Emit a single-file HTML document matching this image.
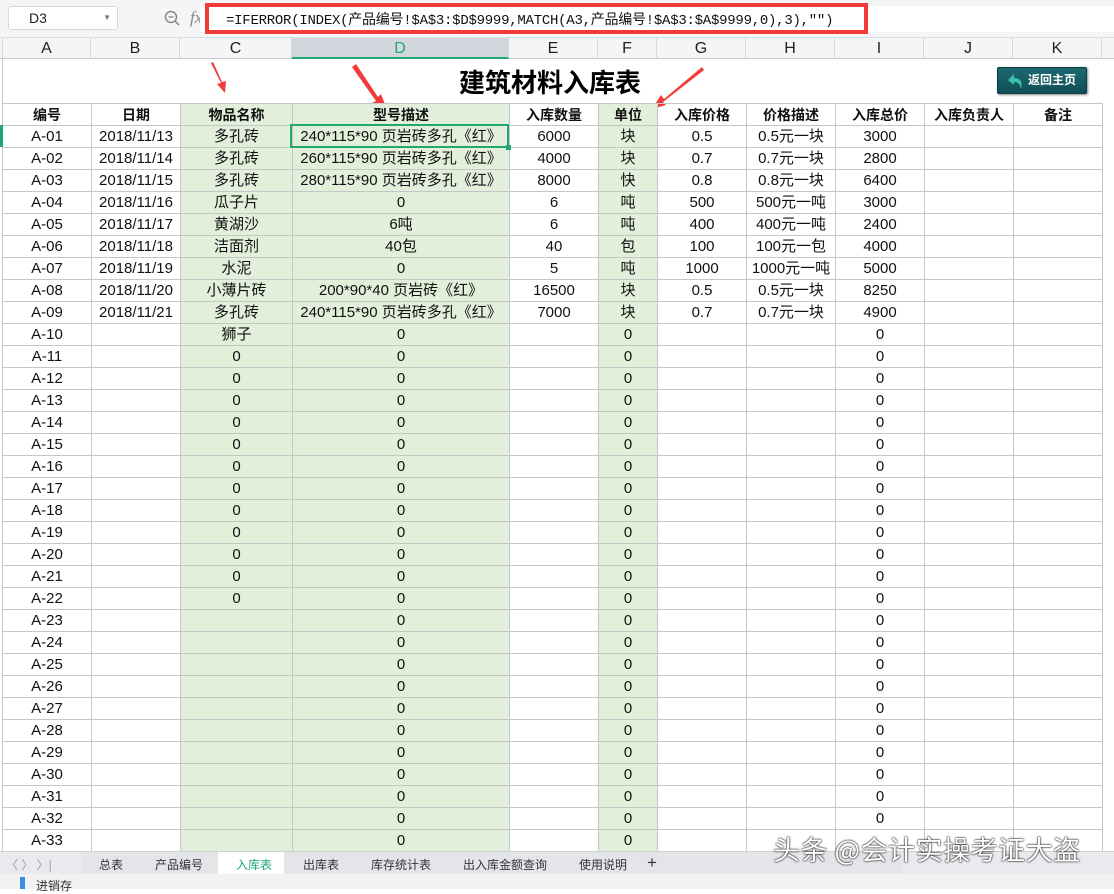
<!DOCTYPE html>
<html><head><meta charset="utf-8"><style>
*{margin:0;padding:0;box-sizing:border-box}
body{width:1114px;height:889px;overflow:hidden;background:#fff;font-family:"Liberation Sans","Noto Sans CJK SC",sans-serif;position:relative}
.fb{position:absolute;left:0;top:0;width:1114px;height:38px;background:#f4f5f7;border-bottom:1px solid #dcdde0}
.nb{position:absolute;left:8px;top:6px;width:110px;height:24px;background:#fff;border:1px solid #d7d8db;border-radius:3px;font-size:14px;line-height:22px;padding-left:20px;color:#222}
.nb i{position:absolute;right:6px;top:0;font-style:normal;font-size:8px;color:#777}
.fx{position:absolute;left:190px;top:8px;font-size:17px;color:#888;font-style:italic;font-family:"Liberation Serif",serif}
.fin{position:absolute;left:200px;top:6px;width:914px;height:26px;background:#fff}
.red{position:absolute;left:205px;top:3px;width:663px;height:31px;border:4px solid #f23a3a}
.ft{position:absolute;left:226px;top:9px;font-family:"Liberation Mono","Noto Sans CJK SC",monospace;font-size:14px;color:#111;letter-spacing:-0.25px;white-space:nowrap}
.ch{position:absolute;top:38px;left:0;width:1114px;height:21px;background:#f4f5f7;border-bottom:1px solid #c7c9cd}
.ch div{position:absolute;top:0;height:20px;border-right:1px solid #d9dadd;text-align:center;font-size:16px;line-height:21px;color:#222}
.title{position:absolute;left:300px;top:63px;width:500px;text-align:center;font-size:26px;font-weight:bold;color:#000;font-family:"Noto Sans CJK SC",sans-serif}
.btn{position:absolute;left:997px;top:67px;width:90px;height:27px;background:linear-gradient(#1d6a70,#0f4f55);border:1px solid #0c3d42;border-radius:2px;box-shadow:1px 1px 2px #888;color:#fff;font-size:12px;font-weight:bold;line-height:25px;padding-left:30px}
.btn svg{position:absolute;left:8px;top:3px}
table{position:absolute;left:2px;top:103px;border-collapse:collapse;table-layout:fixed}
td{height:22px;border:1px solid #c6c6c6;text-align:center;font-size:15px;color:#111;white-space:nowrap;overflow:hidden;padding:0;line-height:20px}
tr.h td{font-weight:bold;font-size:14px}
td.g{background:#e2efda}
.sel{position:absolute;left:290px;top:124px;width:219px;height:24px;border:2px solid #1fa870}
.sel i{position:absolute;right:-4px;bottom:-4px;width:5px;height:5px;background:#1fa870}
.tabs{position:absolute;left:0;top:851px;width:1114px;height:23px;background:#e9eaee;border-top:1px solid #d0d1d4;font-size:12px;color:#333}
.tabs span{position:absolute;top:4px}
.bot{position:absolute;left:0;top:874px;width:1114px;height:15px;background:#f1f2f4}
.wm{position:absolute;left:773px;top:829px;font-size:27px;color:#fff;text-shadow:0 0 2px #000,0 0 1px #000;font-family:"Noto Sans CJK SC",sans-serif;letter-spacing:0.5px}
</style></head><body>
<div class="fb"><div class="nb">D3<i>▼</i></div>
<svg style="position:absolute;left:164px;top:10px" width="16" height="16"><circle cx="7" cy="7" r="5.5" fill="none" stroke="#888" stroke-width="1.5"/><line x1="11" y1="11" x2="15" y2="15" stroke="#888" stroke-width="1.5"/><line x1="4.5" y1="7" x2="9.5" y2="7" stroke="#888" stroke-width="1.3"/></svg>
<div class="fx">fx</div><div class="fin"></div></div>
<div class="red"></div>
<div class="ft">=IFERROR(INDEX(产品编号!$A$3:$D$9999,MATCH(A3,产品编号!$A$3:$A$9999,0),3),"")</div>
<div class="ch">
<div style="left:0;width:3px"></div>
<div style="left:3px;width:88px">A</div><div style="left:91px;width:89px">B</div><div style="left:180px;width:112px">C</div>
<div style="left:292px;width:217px;background:#d3d6dd;color:#1fa870;border-bottom:2px solid #1fa870;height:21px">D</div>
<div style="left:509px;width:89px">E</div><div style="left:598px;width:59px">F</div><div style="left:657px;width:89px">G</div><div style="left:746px;width:89px">H</div><div style="left:835px;width:89px">I</div><div style="left:924px;width:89px">J</div><div style="left:1013px;width:89px">K</div>
</div>
<div style="position:absolute;left:2px;top:59px;width:1px;height:44px;background:#c6c6c6"></div>
<div class="title">建筑材料入库表</div>
<div class="btn"><svg width="20" height="20" viewBox="0 0 20 20"><path d="M8 3 L2 9 L8 14 L8 11 C12 11 14 13 15 18 C17 11 14 7 8 7 Z" fill="#3ec0b0"/></svg>返回主页</div>
<svg style="position:absolute;left:0;top:59px" width="720" height="52"><polygon points="211,4 221,24 217,25 225,34 226,22 222,23 213,3" fill="#f23a3a"/><polygon points="352,8 376,42 372,44 386,48 381,35 378,38 356,5" fill="#f23a3a"/><polygon points="702,8 664,40 661,36 652,50 666,46 663,43 704,11" fill="#f23a3a"/></svg>
<table>
<colgroup><col style="width:89px"><col style="width:89px"><col style="width:112px"><col style="width:217px"><col style="width:89px"><col style="width:59px"><col style="width:89px"><col style="width:89px"><col style="width:89px"><col style="width:89px"><col style="width:89px"></colgroup>
<tr class="h"><td>编号</td><td>日期</td><td class="g">物品名称</td><td class="g">型号描述</td><td>入库数量</td><td class="g">单位</td><td>入库价格</td><td>价格描述</td><td>入库总价</td><td>入库负责人</td><td>备注</td></tr>
<tr><td>A-01</td><td>2018/11/13</td><td class="g">多孔砖</td><td class="g">240*115*90 页岩砖多孔《红》</td><td>6000</td><td class="g">块</td><td>0.5</td><td>0.5元一块</td><td>3000</td><td></td><td></td></tr>
<tr><td>A-02</td><td>2018/11/14</td><td class="g">多孔砖</td><td class="g">260*115*90 页岩砖多孔《红》</td><td>4000</td><td class="g">块</td><td>0.7</td><td>0.7元一块</td><td>2800</td><td></td><td></td></tr>
<tr><td>A-03</td><td>2018/11/15</td><td class="g">多孔砖</td><td class="g">280*115*90 页岩砖多孔《红》</td><td>8000</td><td class="g">快</td><td>0.8</td><td>0.8元一块</td><td>6400</td><td></td><td></td></tr>
<tr><td>A-04</td><td>2018/11/16</td><td class="g">瓜子片</td><td class="g">0</td><td>6</td><td class="g">吨</td><td>500</td><td>500元一吨</td><td>3000</td><td></td><td></td></tr>
<tr><td>A-05</td><td>2018/11/17</td><td class="g">黄湖沙</td><td class="g">6吨</td><td>6</td><td class="g">吨</td><td>400</td><td>400元一吨</td><td>2400</td><td></td><td></td></tr>
<tr><td>A-06</td><td>2018/11/18</td><td class="g">洁面剂</td><td class="g">40包</td><td>40</td><td class="g">包</td><td>100</td><td>100元一包</td><td>4000</td><td></td><td></td></tr>
<tr><td>A-07</td><td>2018/11/19</td><td class="g">水泥</td><td class="g">0</td><td>5</td><td class="g">吨</td><td>1000</td><td>1000元一吨</td><td>5000</td><td></td><td></td></tr>
<tr><td>A-08</td><td>2018/11/20</td><td class="g">小薄片砖</td><td class="g">200*90*40 页岩砖《红》</td><td>16500</td><td class="g">块</td><td>0.5</td><td>0.5元一块</td><td>8250</td><td></td><td></td></tr>
<tr><td>A-09</td><td>2018/11/21</td><td class="g">多孔砖</td><td class="g">240*115*90 页岩砖多孔《红》</td><td>7000</td><td class="g">块</td><td>0.7</td><td>0.7元一块</td><td>4900</td><td></td><td></td></tr>
<tr><td>A-10</td><td></td><td class="g">狮子</td><td class="g">0</td><td></td><td class="g">0</td><td></td><td></td><td>0</td><td></td><td></td></tr>
<tr><td>A-11</td><td></td><td class="g">0</td><td class="g">0</td><td></td><td class="g">0</td><td></td><td></td><td>0</td><td></td><td></td></tr>
<tr><td>A-12</td><td></td><td class="g">0</td><td class="g">0</td><td></td><td class="g">0</td><td></td><td></td><td>0</td><td></td><td></td></tr>
<tr><td>A-13</td><td></td><td class="g">0</td><td class="g">0</td><td></td><td class="g">0</td><td></td><td></td><td>0</td><td></td><td></td></tr>
<tr><td>A-14</td><td></td><td class="g">0</td><td class="g">0</td><td></td><td class="g">0</td><td></td><td></td><td>0</td><td></td><td></td></tr>
<tr><td>A-15</td><td></td><td class="g">0</td><td class="g">0</td><td></td><td class="g">0</td><td></td><td></td><td>0</td><td></td><td></td></tr>
<tr><td>A-16</td><td></td><td class="g">0</td><td class="g">0</td><td></td><td class="g">0</td><td></td><td></td><td>0</td><td></td><td></td></tr>
<tr><td>A-17</td><td></td><td class="g">0</td><td class="g">0</td><td></td><td class="g">0</td><td></td><td></td><td>0</td><td></td><td></td></tr>
<tr><td>A-18</td><td></td><td class="g">0</td><td class="g">0</td><td></td><td class="g">0</td><td></td><td></td><td>0</td><td></td><td></td></tr>
<tr><td>A-19</td><td></td><td class="g">0</td><td class="g">0</td><td></td><td class="g">0</td><td></td><td></td><td>0</td><td></td><td></td></tr>
<tr><td>A-20</td><td></td><td class="g">0</td><td class="g">0</td><td></td><td class="g">0</td><td></td><td></td><td>0</td><td></td><td></td></tr>
<tr><td>A-21</td><td></td><td class="g">0</td><td class="g">0</td><td></td><td class="g">0</td><td></td><td></td><td>0</td><td></td><td></td></tr>
<tr><td>A-22</td><td></td><td class="g">0</td><td class="g">0</td><td></td><td class="g">0</td><td></td><td></td><td>0</td><td></td><td></td></tr>
<tr><td>A-23</td><td></td><td class="g"></td><td class="g">0</td><td></td><td class="g">0</td><td></td><td></td><td>0</td><td></td><td></td></tr>
<tr><td>A-24</td><td></td><td class="g"></td><td class="g">0</td><td></td><td class="g">0</td><td></td><td></td><td>0</td><td></td><td></td></tr>
<tr><td>A-25</td><td></td><td class="g"></td><td class="g">0</td><td></td><td class="g">0</td><td></td><td></td><td>0</td><td></td><td></td></tr>
<tr><td>A-26</td><td></td><td class="g"></td><td class="g">0</td><td></td><td class="g">0</td><td></td><td></td><td>0</td><td></td><td></td></tr>
<tr><td>A-27</td><td></td><td class="g"></td><td class="g">0</td><td></td><td class="g">0</td><td></td><td></td><td>0</td><td></td><td></td></tr>
<tr><td>A-28</td><td></td><td class="g"></td><td class="g">0</td><td></td><td class="g">0</td><td></td><td></td><td>0</td><td></td><td></td></tr>
<tr><td>A-29</td><td></td><td class="g"></td><td class="g">0</td><td></td><td class="g">0</td><td></td><td></td><td>0</td><td></td><td></td></tr>
<tr><td>A-30</td><td></td><td class="g"></td><td class="g">0</td><td></td><td class="g">0</td><td></td><td></td><td>0</td><td></td><td></td></tr>
<tr><td>A-31</td><td></td><td class="g"></td><td class="g">0</td><td></td><td class="g">0</td><td></td><td></td><td>0</td><td></td><td></td></tr>
<tr><td>A-32</td><td></td><td class="g"></td><td class="g">0</td><td></td><td class="g">0</td><td></td><td></td><td>0</td><td></td><td></td></tr>
<tr><td>A-33</td><td></td><td class="g"></td><td class="g">0</td><td></td><td class="g">0</td><td></td><td></td><td></td><td></td><td></td></tr>
</table>
<div class="sel"><i></i></div>
<div style="position:absolute;left:0;top:125px;width:3px;height:22px;background:#1fa870"></div>
<div class="tabs">
<span style="left:6px;color:#999">〈 〉 〉|</span>
<div style="position:absolute;left:82px;top:0;width:820px;height:22px;background:#e4e5e9"></div>
<span style="left:99px">总表</span><span style="left:155px">产品编号</span>
<div style="position:absolute;left:218px;top:0;width:66px;height:22px;background:#fff"></div>
<span style="left:236px;color:#1fa870">入库表</span><span style="left:303px">出库表</span><span style="left:371px">库存统计表</span><span style="left:463px">出入库金额查询</span><span style="left:579px">使用说明</span><span style="left:647px;font-size:17px;top:1px">+</span>
</div>
<div class="bot"><span style="position:absolute;left:20px;top:3px;width:5px;height:12px;background:#3b8de0"></span><span style="position:absolute;left:36px;top:3px;font-size:12px;color:#333">进销存</span></div>
<div class="wm">头条 @会计实操考证大盗</div>
</body></html>
